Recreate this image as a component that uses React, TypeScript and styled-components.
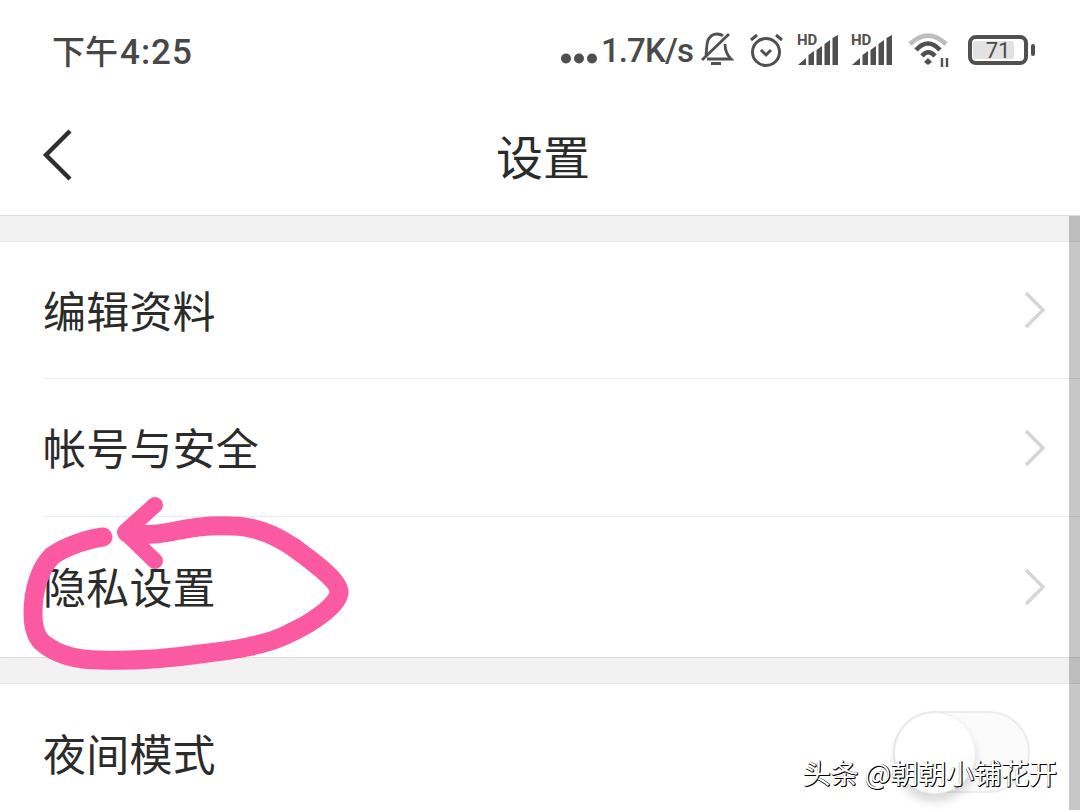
import styled, { createGlobalStyle } from 'styled-components';

const GlobalStyle = createGlobalStyle`
  html, body {
    margin: 0;
    padding: 0;
    background: #ffffff;
  }
  body {
    font-family: "Roboto", "Noto Sans CJK SC", sans-serif;
  }
`;

const Screen = styled.div`
  position: relative;
  width: 1080px;
  height: 810px;
  overflow: hidden;
  background: #ffffff;
`;

const StatusBar = styled.div`
  height: 100px;
  display: flex;
  align-items: center;
  justify-content: space-between;
  padding: 0 45px 0 52px;
  box-sizing: border-box;
  color: #4a4a4a;
`;

const Clock = styled.div`
  font-family: "Noto Sans CJK SC", sans-serif;
  font-size: 33px;
  font-weight: 500;
  color: #474747;
  display: flex;
  align-items: baseline;
`;

const ClockDigits = styled.span`
  font-family: "Roboto", sans-serif;
  font-size: 35px;
  font-weight: 500;
  letter-spacing: 1px;
  margin-left: 2px;
`;

const StatusIcons = styled.div`
  display: flex;
  align-items: center;
`;

const StatusItem = styled.div<{ $ml?: number; $mt?: number }>`
  display: flex;
  margin-left: ${(p) => p.$ml ?? 0}px;
  margin-top: ${(p) => p.$mt ?? 0}px;
`;

const Speed = styled.div`
  font-family: "Roboto", sans-serif;
  font-size: 33px;
  font-weight: 500;
  letter-spacing: -0.9px;
  margin-left: 4px;
`;

const Battery = styled.div`
  position: relative;
  width: 60px;
  height: 30px;
  box-sizing: border-box;
  border: 4px solid #505050;
  border-radius: 8px;
  display: flex;
  align-items: center;
  justify-content: center;
  font-family: "Roboto", sans-serif;
  font-size: 22px;
  color: #4a4a4a;
  margin-left: 16px;
  margin-right: 7px;
  &::before {
    content: '';
    position: absolute;
    left: 1px;
    top: 2px;
    bottom: 2px;
    width: 41px;
    background: #e2e2e2;
    border-radius: 2px;
  }
  &::after {
    content: '';
    position: absolute;
    right: -11px;
    top: 5px;
    width: 4px;
    height: 12px;
    background: #505050;
    border-radius: 2px;
  }
`;

const BatteryText = styled.span`
  position: relative;
`;

const Header = styled.div`
  position: relative;
  height: 115px;
  display: flex;
  align-items: center;
  justify-content: center;
`;

const BackButton = styled.div`
  position: absolute;
  left: 40px;
  top: 27px;
  display: flex;
`;

const Title = styled.div`
  font-family: "Noto Sans CJK SC", sans-serif;
  font-size: 47px;
  color: #2b2b2b;
  margin-top: -6px;
  margin-left: 6px;
`;

const SectionGap = styled.div`
  height: 25px;
  background: #f2f2f2;
  border-top: 1px solid #dedede;
  border-bottom: 1px solid #e6e6e6;
`;

const Row = styled.div<{ $height: number; $divider?: boolean }>`
  height: ${(p) => p.$height}px;
  margin-left: 43px;
  box-sizing: border-box;
  display: flex;
  align-items: center;
  justify-content: space-between;
  padding-right: 33px;
  border-bottom: ${(p) => (p.$divider ? '1px solid #ececec' : 'none')};
`;

const RowLabel = styled.div<{ $mt?: number }>`
  font-family: "Noto Sans CJK SC", sans-serif;
  font-size: 43px;
  color: #2b2b2b;
  letter-spacing: 0.2px;
  margin-top: ${(p) => p.$mt ?? 0}px;
`;

const Chevron = styled.svg`
  display: block;
`;

const Toggle = styled.div`
  position: absolute;
  left: 893px;
  top: 711px;
  width: 137px;
  height: 82px;
  box-sizing: border-box;
  border: 2px solid #ececec;
  border-radius: 41px;
  background: #fbfbfb;
`;

const ToggleKnob = styled.div`
  position: absolute;
  left: -1px;
  top: -1px;
  width: 80px;
  height: 80px;
  border-radius: 50%;
  background: #ffffff;
  border: 1px solid #ececec;
  box-shadow: 0 8px 10px rgba(0, 0, 0, 0.14);
`;

const Scrollbar = styled.div`
  position: absolute;
  right: 0;
  top: 216px;
  bottom: 0;
  width: 11px;
  background: rgba(0, 0, 0, 0.22);
`;

const Annotation = styled.svg`
  position: absolute;
  left: 0;
  top: 0;
  pointer-events: none;
`;

const Watermark = styled.div`
  position: absolute;
  left: 803px;
  top: 753px;
  font-family: "Noto Sans CJK SC", sans-serif;
  font-size: 27.7px;
  line-height: 38px;
  white-space: nowrap;
  color: #ffffff;
  text-shadow: 1px 1px 0 #000, 0 1px 0 #000, 1px 0 0 #222;
`;

function SignalIcon() {
  return (
    <svg width="42" height="40" viewBox="0 -4 42 40" fill="#4f4f4f">
      <text x="0" y="11" fontFamily="Roboto, sans-serif" fontSize="15" fontWeight="700">HD</text>
      <polygon points="1,31 9,24 9,31" />
      <polygon points="11.5,31 11.5,21 17,17 17,31" />
      <polygon points="19.5,31 19.5,16 25,12 25,31" />
      <polygon points="27.5,31 27.5,10 33,6 33,31" />
      <polygon points="35.5,31 35.5,4 41,1 41,31" />
    </svg>
  );
}

function RowChevron() {
  return (
    <Chevron width="24" height="40" viewBox="0 0 24 40" fill="none">
      <path d="M3 3 L20 20 L3 37" stroke="#d6d6d6" strokeWidth="3.5" />
    </Chevron>
  );
}

export default function App() {
  return (
    <Screen>
      <GlobalStyle />
      <StatusBar>
        <Clock>
          下午<ClockDigits>4:25</ClockDigits>
        </Clock>
        <StatusIcons>
          <StatusItem $mt={16}>
            <svg width="36" height="11" viewBox="0 0 36 11" fill="#4f4f4f">
              <circle cx="5" cy="5.5" r="5" />
              <circle cx="18" cy="5.5" r="5" />
              <circle cx="31" cy="5.5" r="5" />
            </svg>
          </StatusItem>
          <Speed>1.7K/s</Speed>
          <StatusItem $ml={7}>
            <svg width="34" height="36" viewBox="0 0 34 36" fill="none" stroke="#505050" strokeWidth="2.8">
              <path d="M6 23 C7 18 6 13 8 8 C10 4 13 2 17 2 C20 2 22 3 23 4" />
              <path d="M25 12 C25 18 27 23 31 27 L7 27" />
              <path d="M2 28 L29 2" />
              <path d="M11 31.5 H21" strokeWidth="3" />
            </svg>
          </StatusItem>
          <StatusItem $ml={15}>
            <svg width="35" height="36" viewBox="0 0 35 36" fill="none" stroke="#505050" strokeWidth="3">
              <circle cx="17" cy="20" r="13.5" />
              <path d="M12 18 L17 23 L22 18" />
              <path d="M2 8 L8 3 M27 3 L33 8" />
            </svg>
          </StatusItem>
          <StatusItem $ml={13}>
            <SignalIcon />
          </StatusItem>
          <StatusItem $ml={12}>
            <SignalIcon />
          </StatusItem>
          <StatusItem $ml={13}>
            <svg width="46" height="36" viewBox="0 0 46 36" fill="none">
              <path d="M4 12 Q22 -4.6 40 12" stroke="#bdbdbd" strokeWidth="4.5" />
              <path d="M10 18 Q22 5 34 18" stroke="#505050" strokeWidth="4.5" />
              <path d="M16 24 Q22 16.5 29 24" stroke="#505050" strokeWidth="4.5" />
              <polygon points="22,26 26,30 22,33 18,30" fill="#505050" />
              <path d="M36 26 V35 M41 26 V35" stroke="#505050" strokeWidth="2.4" />
            </svg>
          </StatusItem>
          <Battery>
            <BatteryText>71</BatteryText>
          </Battery>
        </StatusIcons>
      </StatusBar>
      <Header>
        <BackButton>
          <svg width="34" height="56" viewBox="0 0 34 56" fill="none">
            <path d="M30 4 L6 28 L30 52" stroke="#2f2f2f" strokeWidth="4.4" />
          </svg>
        </BackButton>
        <Title>设置</Title>
      </Header>
      <SectionGap />
      <Row $height={137} $divider>
        <RowLabel $mt={-2}>编辑资料</RowLabel>
        <RowChevron />
      </Row>
      <Row $height={138} $divider>
        <RowLabel $mt={-4}>帐号与安全</RowLabel>
        <RowChevron />
      </Row>
      <Row $height={140}>
        <RowLabel $mt={-4}>隐私设置</RowLabel>
        <RowChevron />
      </Row>
      <SectionGap />
      <Row $height={128}>
        <RowLabel $mt={8}>夜间模式</RowLabel>
      </Row>
      <Toggle>
        <ToggleKnob />
      </Toggle>
      <Scrollbar />
      <Annotation width="1080" height="810" viewBox="0 0 1080 810" fill="none">
        <path
          d="M103 537 C88 539 66 546 52 556 C40 568 33 590 33 613 C33 628 36 638 44 644 C58 655 75 660 100 660 C130 661 165 659 200 654 C235 650 268 645 290 633 C310 624 339 605 339 592 C339 580 312 561 293 547 C275 535 255 526 232 526 C205 525 190 528 170 532 C155 535 140 535 127 533"
          stroke="#fb5aa2"
          strokeWidth="19"
          strokeLinecap="round"
          strokeLinejoin="round"
        />
        <path
          d="M155 505 L125 532 L155 561"
          stroke="#fb5aa2"
          strokeWidth="16"
          strokeLinecap="round"
          strokeLinejoin="round"
        />
      </Annotation>
      <Watermark>头条 @朝朝小铺花开</Watermark>
    </Screen>
  );
}
